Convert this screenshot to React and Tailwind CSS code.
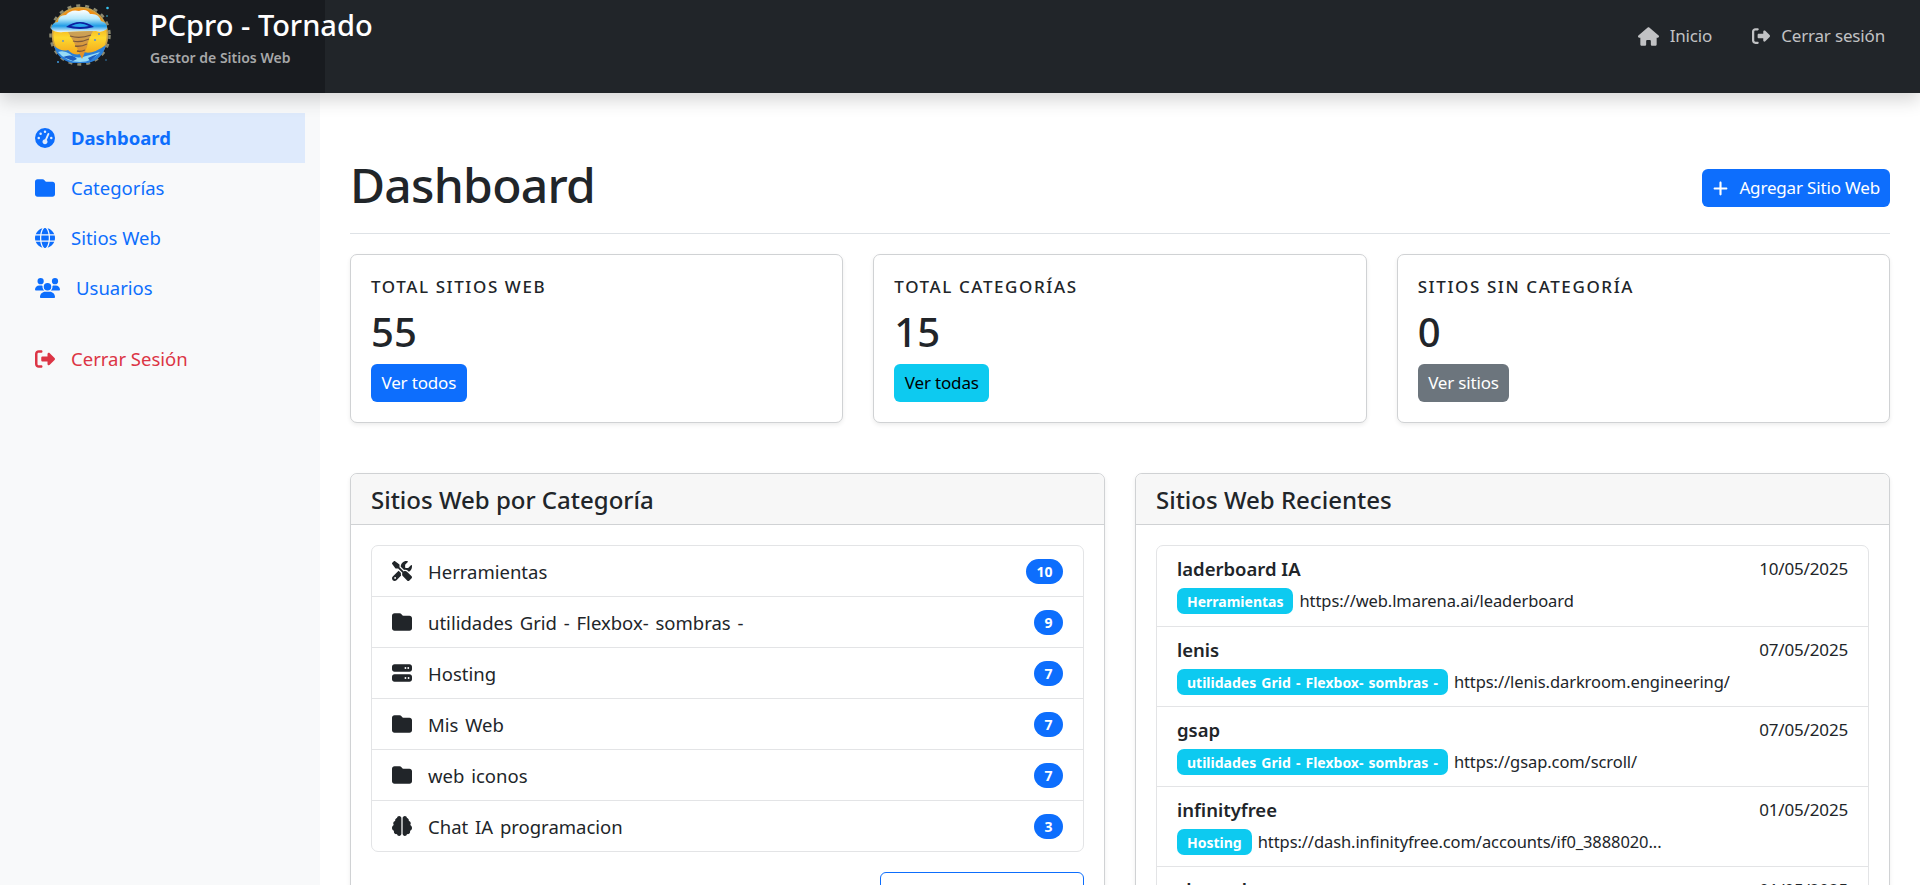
import React from "react";
import {
  FaGaugeHigh, FaFolder, FaGlobe, FaUsers, FaRightFromBracket, FaHouse, FaPlus, FaScrewdriverWrench, FaServer, FaBrain,
} from "react-icons/fa6";

function Logo() {
  return (
    <svg width="100" height="80" viewBox="0 0 100 80" className="shrink-0">
      <defs>
        <linearGradient id="sun" x1="0" y1="0" x2="0" y2="1">
          <stop offset="0.2" stopColor="#ee8f16" />
          <stop offset="0.55" stopColor="#fdd92f" />
          <stop offset="0.85" stopColor="#f5a81c" />
        </linearGradient>
        <linearGradient id="cloud" x1="0" y1="0" x2="0" y2="1">
          <stop offset="0" stopColor="#ffffff" />
          <stop offset="0.4" stopColor="#b4e8fb" />
          <stop offset="0.72" stopColor="#1f9be6" />
          <stop offset="1" stopColor="#eef9ff" />
        </linearGradient>
        <linearGradient id="funnel" x1="0" y1="0" x2="0" y2="1">
          <stop offset="0" stopColor="#c9a25a" />
          <stop offset="1" stopColor="#e98f1e" />
        </linearGradient>
      </defs>
      <circle cx="50" cy="35" r="29.5" fill="none" stroke="#8b8a72" strokeWidth="2.5" strokeDasharray="4 5" />
      <circle cx="50" cy="35" r="27.5" fill="url(#sun)" stroke="#c9a24a" strokeWidth="1.6" />
      <path d="M24 46 Q32 52 38 50 Q46 58 54 52 Q62 55 76 45 Q72 60 58 63 L42 63 Q28 60 24 46Z" fill="#2a7fd8" />
      <path d="M28 52 Q34 50 40 54 Q46 60 56 56 Q64 54 70 52 Q62 62 50 62 Q36 62 28 52Z" fill="#97dcf7" />
      <path d="M33 57 Q42 53 47 59 L43 61Z M58 58 Q64 55 68 54 L60 61Z" fill="#1d5fc0" />
      <path d="M21 29 Q22 22 28 22 Q28 15 36 15 Q41 9 49 11 Q57 8 60 14 Q69 13 71 21 Q78 23 77 29 Q72 33 66 31 L33 32 Q26 33 21 29Z" fill="url(#cloud)" />
      <path d="M36 27 Q50 17 64 27 Q50 31 36 27Z" fill="#0c1fa0" />
      <path d="M41 26 Q50 21 59 26 Q50 28 41 26Z" fill="#27a6ea" />
      <path d="M38 32 L63 31 L59 39 L57 47 L52 59 L47 48 L42 39Z" fill="url(#funnel)" />
      <path d="M40 36 Q50 39 61 35 M43 41 Q50 43 59 39 M45 46 Q51 47 57 44 M47 51 Q51 52 55 50" stroke="#7d5a3a" strokeWidth="1.3" fill="none" />
      <circle cx="77.5" cy="8" r="1.3" fill="#37c3f0" />
      <circle cx="77" cy="16" r="0.8" fill="#37c3f0" />
      <circle cx="28" cy="62" r="1" fill="#3f9be0" />
      <circle cx="76" cy="60" r="0.7" fill="#3f9be0" />
      <circle cx="65" cy="40" r="1.1" fill="#5a8fd0" />
      <circle cx="69" cy="34" r="1" fill="#5a8fd0" />
      <circle cx="33" cy="41" r="0.9" fill="#5a8fd0" />
    </svg>
  );
}

const cats = [
  [FaScrewdriverWrench, "Herramientas", "10"],
  [FaFolder, "utilidades Grid - Flexbox- sombras -", "9"],
  [FaServer, "Hosting", "7"],
  [FaFolder, "Mis Web", "7"],
  [FaFolder, "web iconos", "7"],
  [FaBrain, "Chat IA programacion", "3"],
];

const recent = [
  ["laderboard IA", "10/05/2025", "Herramientas", "https://web.lmarena.ai/leaderboard"],
  ["lenis", "07/05/2025", "utilidades Grid - Flexbox- sombras -", "https://lenis.darkroom.engineering/"],
  ["gsap", "07/05/2025", "utilidades Grid - Flexbox- sombras -", "https://gsap.com/scroll/"],
  ["infinityfree", "01/05/2025", "Hosting", "https://dash.infinityfree.com/accounts/if0_3888020..."],
  ["chocoplate", "01/05/2025", "Hosting", "https://chocoplate.com/"],
];

function NavItem({ icon: Icon, label, active, color = "text-[#0d6efd]", iconClass = "w-[20px] h-[20px]" }) {
  return (
    <div className={`flex items-center h-[50px] pl-[20px] gap-[16px] ${color} ${active ? "bg-[#deeafc] font-bold" : ""}`}>
      <Icon className={`shrink-0 ${iconClass}`} />
      <span>{label}</span>
    </div>
  );
}

function Stat({ label, value, btn, btnClass }) {
  return (
    <div className="flex-1 h-[169px] border border-[#d0d2d4] rounded-[7px] shadow-[0_2px_4px_rgba(0,0,0,0.075)] bg-white p-[20px]">
      <div className="text-[17px] font-medium tracking-[1.6px] leading-[24px] text-[#212529] uppercase">{label}</div>
      <div className="text-[40px] font-medium leading-[48px] text-[#212529] mt-[9px]">{value}</div>
      <div className={`inline-flex items-center h-[38px] px-[10.5px] rounded-[6px] text-[17px] tracking-[-0.01em] mt-[8px] ${btnClass}`}>{btn}</div>
    </div>
  );
}

function Panel({ title, children }) {
  return (
    <div className="flex-1 min-w-0 border border-[#d0d2d4] rounded-[7px] bg-white shadow-[0_2px_4px_rgba(0,0,0,0.075)]">
      <div className="h-[51px] flex items-center px-[20px] pt-[2px] bg-[#f7f7f7] border-b border-[#d0d2d4] rounded-t-[7px] text-[24px] font-medium text-[#212529]">
        {title}
      </div>
      <div className="p-[20px]">{children}</div>
    </div>
  );
}

export default function App() {
  return (
    <div className="h-screen overflow-hidden flex flex-col bg-white text-[#212529]" style={{ fontFamily: '"Noto Sans", "Open Sans", sans-serif' }}>
      <header className="relative z-10 h-[93px] shrink-0 flex bg-[#212529] shadow-[0_8px_16px_rgba(0,0,0,0.15)]">
        <div className="w-[325px] h-full bg-[#181b1f] flex items-start pl-[30px]">
          <Logo />
          <div className="ml-[20px] mt-[5px]">
            <div className="text-[29px] font-medium leading-[40px] text-white whitespace-nowrap">PCpro - Tornado</div>
            <div className="text-[14px] font-semibold leading-[20px] text-[#a7a8a9] mt-[3px]">Gestor de Sitios Web</div>
          </div>
        </div>
        <nav className="ml-auto flex items-start pt-[24px] pr-[35px] text-[17px] tracking-[-0.01em] text-[#c1c2c4] gap-[40px]">
          <div className="flex items-center gap-[11px] h-[24px] leading-[24px]"><FaHouse className="w-[21px] h-[19px]" />Inicio</div>
          <div className="flex items-center gap-[11px] h-[24px] leading-[24px]"><FaRightFromBracket className="w-[18px] h-[18px]" />Cerrar sesión</div>
        </nav>
      </header>

      <div className="flex flex-1 min-h-0">
        <aside className="w-[320px] shrink-0 bg-[#f8f9fa] pt-[20px] px-[15px] text-[18.5px]">
          <NavItem icon={FaGaugeHigh} label="Dashboard" active />
          <NavItem icon={FaFolder} label="Categorías" />
          <NavItem icon={FaGlobe} label="Sitios Web" />
          <NavItem icon={FaUsers} label="Usuarios" iconClass="w-[25px] h-[20px]" />
          <div className="h-[21px]" />
          <NavItem icon={FaRightFromBracket} label="Cerrar Sesión" color="text-[#dc3545]" />
        </aside>

        <main className="flex-1 min-w-0 px-[30px]">
          <div className="h-[141px] flex items-end justify-between pb-[26px] border-b border-[#dee2e6]">
            <h1 className="text-[48px] font-medium tracking-[-0.015em] leading-[62px] text-[#212529] -mb-[9px]">Dashboard</h1>
            <div className="flex items-center h-[38px] bg-[#0d6efd] text-white rounded-[6px] px-[10px] gap-[10px] text-[17px] tracking-[-0.01em]">
              <FaPlus className="w-[17px] h-[17px]" />Agregar Sitio Web
            </div>
          </div>

          <div className="flex gap-[30px] mt-[20px]">
            <Stat label="Total Sitios Web" value="55" btn="Ver todos" btnClass="bg-[#0d6efd] text-white" />
            <Stat label="Total Categorías" value="15" btn="Ver todas" btnClass="bg-[#0dcaf0] text-black" />
            <Stat label="Sitios sin Categoría" value="0" btn="Ver sitios" btnClass="bg-[#6c757d] text-white" />
          </div>

          <div className="flex gap-[30px] mt-[50px]">
            <Panel title="Sitios Web por Categoría">
              <div className="border border-[#e3e4e6] rounded-[7px]">
                {cats.map(([Icon, name, n], i) => (
                  <div key={name} className={`flex items-center pl-[20px] pr-[20px] text-[18.5px] [word-spacing:2px] ${i ? "h-[51px] border-t border-[#e3e4e6]" : "h-[50px]"}`}>
                    <Icon className="w-[20px] h-[20px] mr-[16px] shrink-0 text-[#212529]" />
                    <span className="pt-[2px]">{name}</span>
                    <span className="ml-auto h-[25px] px-[10.5px] rounded-full bg-[#0d6efd] text-white text-[14px] font-bold flex items-center justify-center">{n}</span>
                  </div>
                ))}
              </div>
              <div className="flex justify-end mt-[20px]">
                <div className="w-[204px] h-[38px] border border-[#0d6efd] rounded-[6px] text-[#0d6efd] text-[17px] tracking-[-0.01em] flex items-center justify-center">Ver todas las categorías</div>
              </div>
            </Panel>

            <Panel title="Sitios Web Recientes">
              <div className="border border-[#e3e4e6] rounded-[7px]">
                {recent.map(([name, date, badge, url], i) => (
                  <div key={name} className={`h-[80px] px-[20px] pt-[10px] ${i ? "border-t border-[#e3e4e6]" : ""}`}>
                    <div className="flex items-center justify-between h-[26px]">
                      <span className="text-[18.5px] font-semibold">{name}</span>
                      <span className="text-[17px] tracking-[-0.01em]">{date}</span>
                    </div>
                    <div className="flex items-center gap-[6px] mt-[6px] text-[16.5px] tracking-[-0.005em] whitespace-nowrap">
                      <span className="h-[26px] px-[10px] rounded-[7px] bg-[#0dcaf0] text-white text-[14px] tracking-normal [word-spacing:1.5px] font-bold flex items-center">{badge}</span>
                      <span>{url}</span>
                    </div>
                  </div>
                ))}
              </div>
            </Panel>
          </div>
        </main>
      </div>
    </div>
  );
}
